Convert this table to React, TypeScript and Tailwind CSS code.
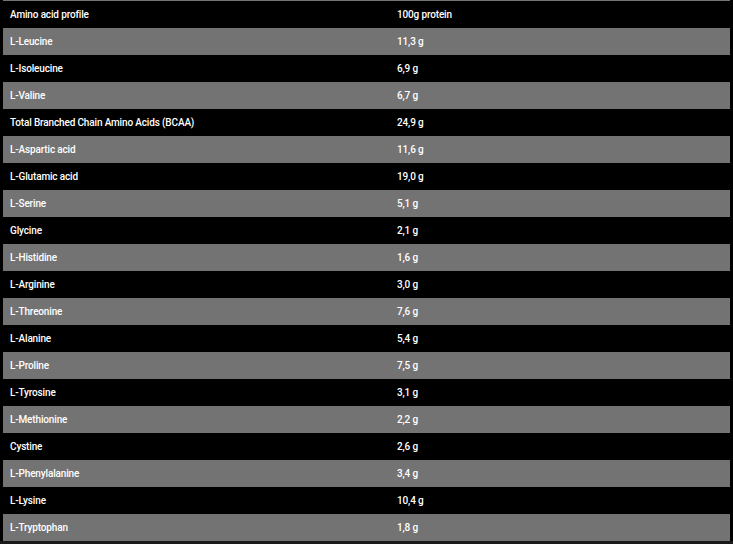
const rows: [string, string][] = [
  ["Amino acid profile", "100g protein"],
  ["L-Leucine", "11,3 g"],
  ["L-Isoleucine", "6,9 g"],
  ["L-Valine", "6,7 g"],
  ["Total Branched Chain Amino Acids (BCAA)", "24,9 g"],
  ["L-Aspartic acid", "11,6 g"],
  ["L-Glutamic acid", "19,0 g"],
  ["L-Serine", "5,1 g"],
  ["Glycine", "2,1 g"],
  ["L-Histidine", "1,6 g"],
  ["L-Arginine", "3,0 g"],
  ["L-Threonine", "7,6 g"],
  ["L-Alanine", "5,4 g"],
  ["L-Proline", "7,5 g"],
  ["L-Tyrosine", "3,1 g"],
  ["L-Methionine", "2,2 g"],
  ["Cystine", "2,6 g"],
  ["L-Phenylalanine", "3,4 g"],
  ["L-Lysine", "10,4 g"],
  ["L-Tryptophan", "1,8 g"],
];

export default function App() {
  return (
    <div className="w-[733px] h-[544px] bg-black overflow-hidden" style={{ fontFamily: "Roboto, 'Liberation Sans', sans-serif" }}>
      <div className="ml-[3px] w-[727px] border-t border-[#737373]">
        {rows.map(([a, b], i) => (
          <div key={i} className={`flex h-[27px] items-center pb-[1px] text-[10px] font-medium tracking-[-0.15px] text-white ${i % 2 === 1 ? "bg-[#737373]" : "bg-black"}`}>
            <div className="w-[386px] pl-[7px]">{a}</div>
            <div className="pl-[8px]">{b}</div>
          </div>
        ))}
      </div>
      <div className="h-[3px] bg-[#1a1a1a]" />
    </div>
  );
}
